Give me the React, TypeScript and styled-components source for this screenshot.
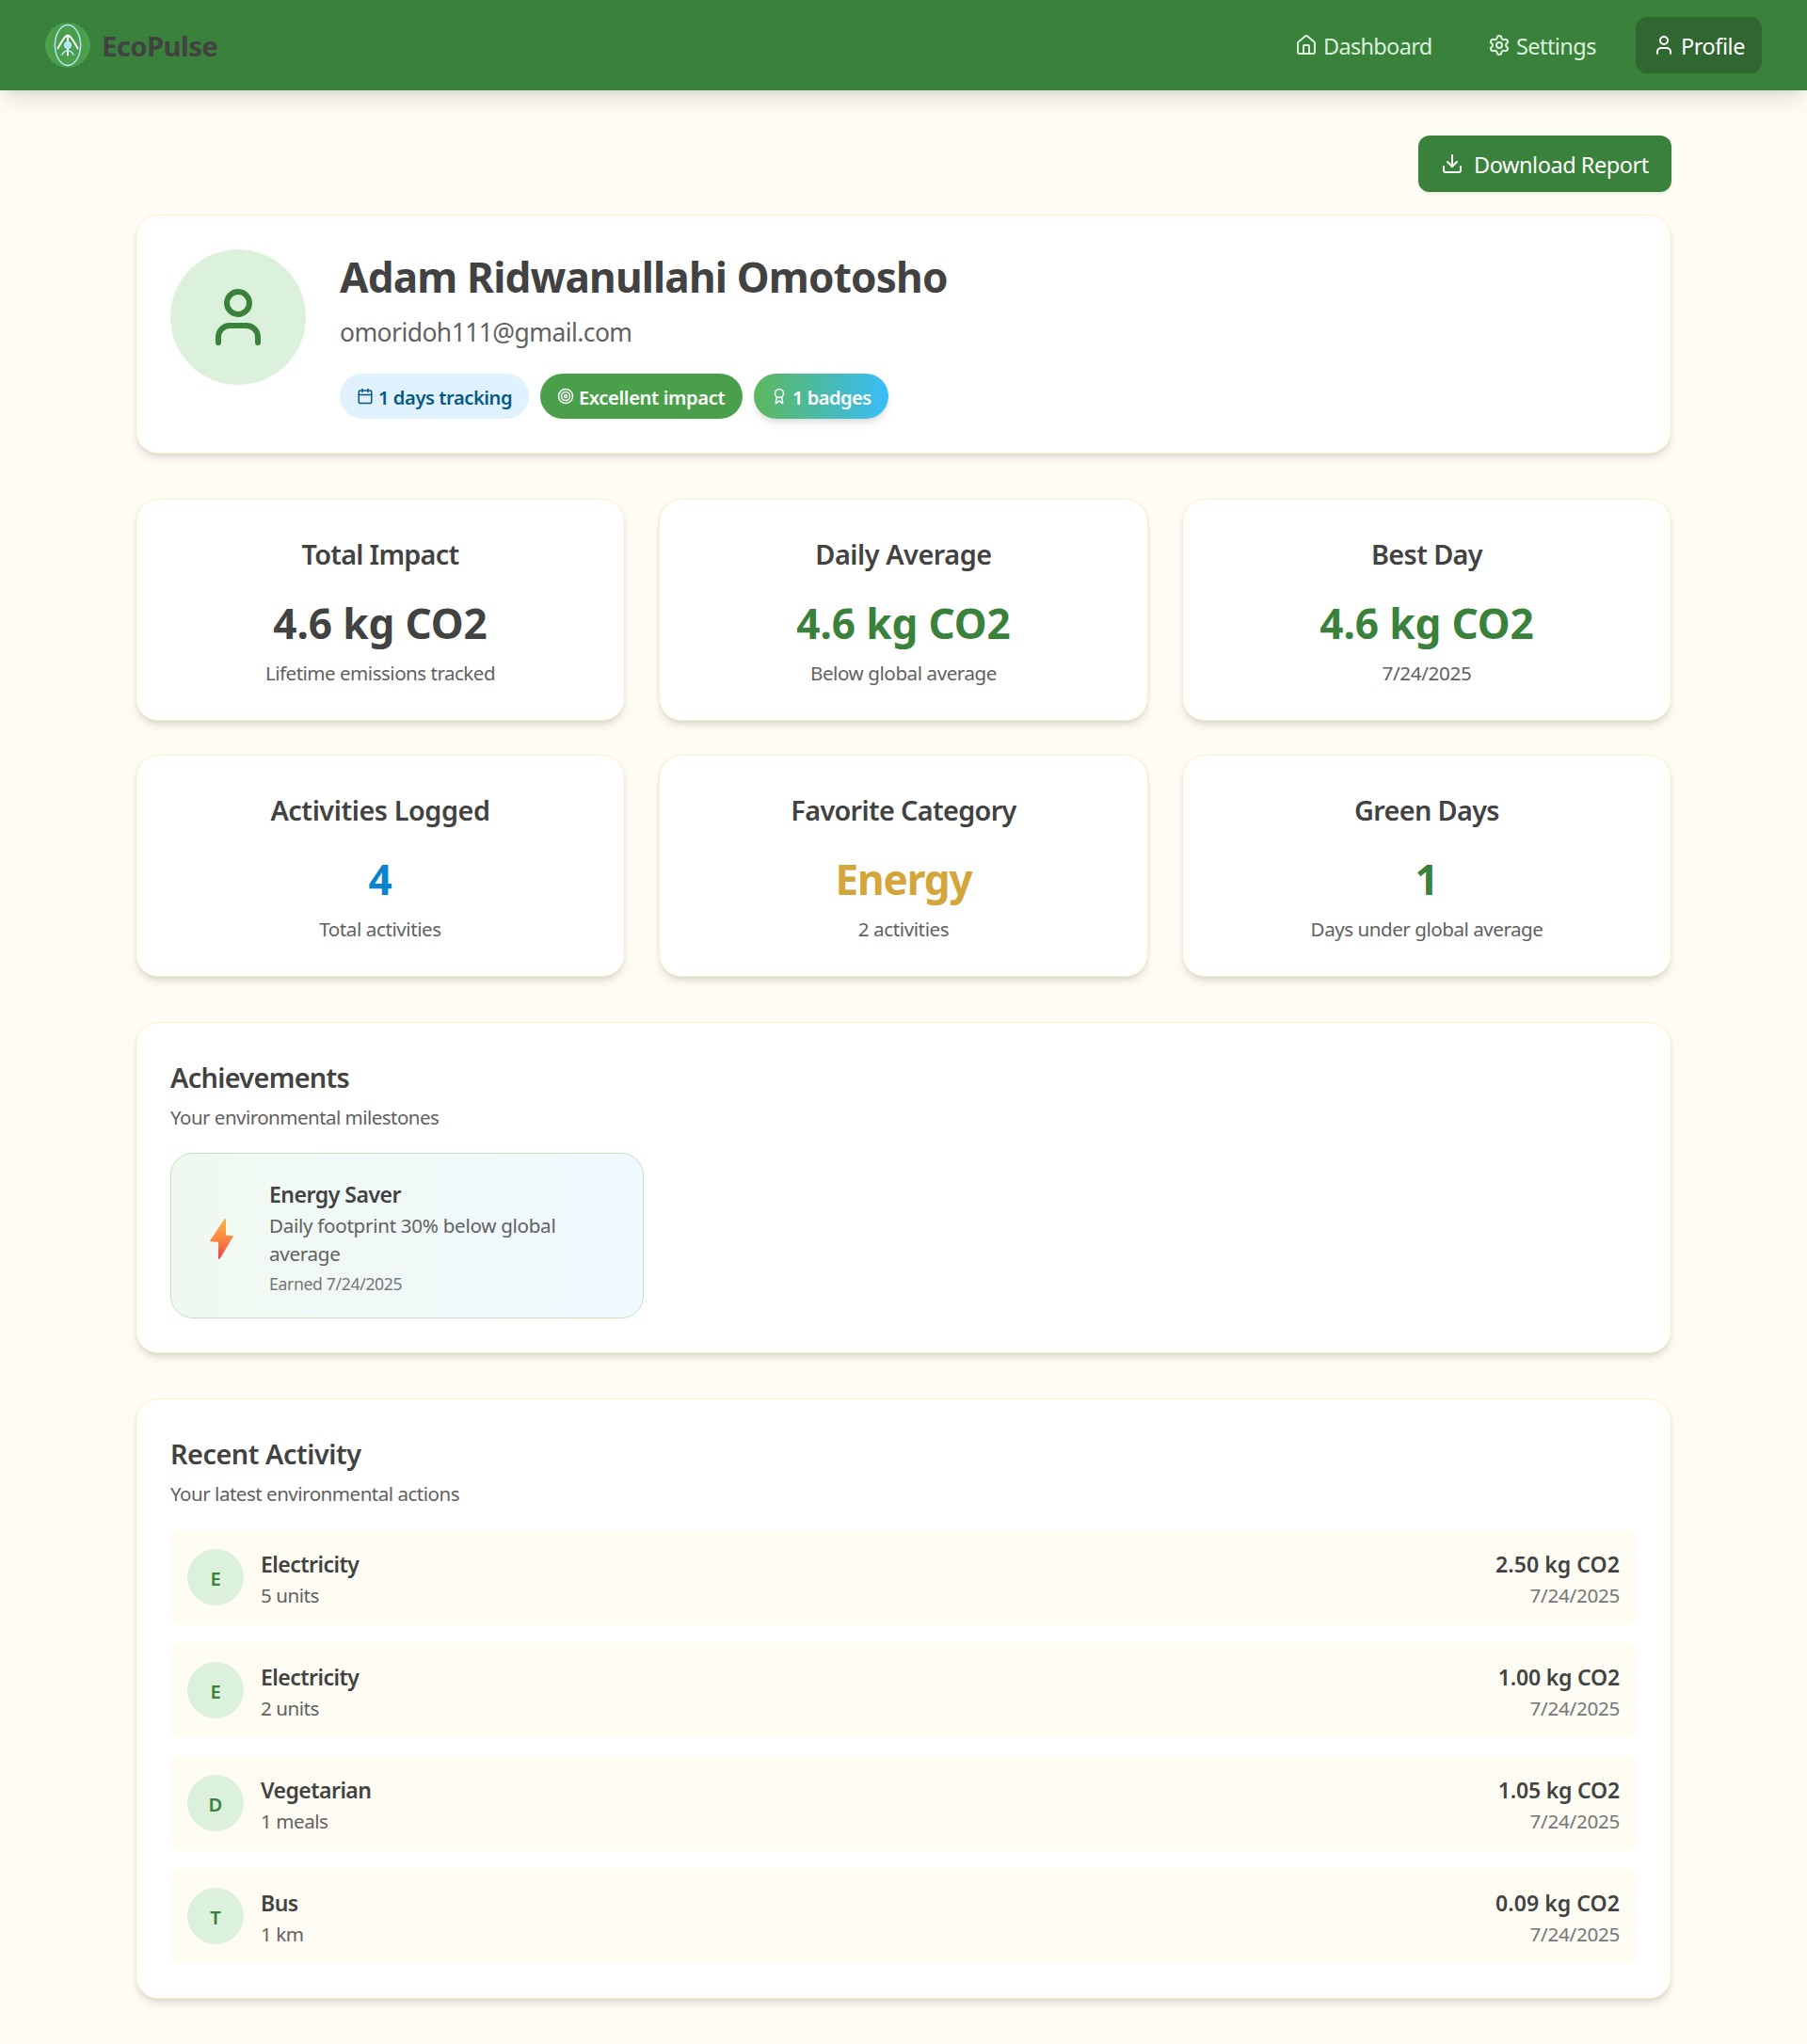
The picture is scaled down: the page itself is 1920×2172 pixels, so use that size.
import React from "react";
import styled, { createGlobalStyle, css } from "styled-components";
import { Award, Calendar, Download, House, Settings, Target, User } from "lucide-react";

const color = {
  page: "#fffcf5",
  row: "#fffdf3",
  cardBorder: "#fbefc3",
  ink: "#424242",
  muted: "#616161",
  faint: "#757575",
  green: "#3a813b",
  greenDark: "#30662f",
  greenMid: "#4a9f4a",
  greenSoft: "#dcf1dc",
  blue: "#0a84cc",
  gold: "#d4a53a",
};

const type = (size: number, line: number, weight = 400) => css<{ $track?: number }>`
  font-size: ${size * (weight === 600 ? 0.96 : 0.98)}px;
  line-height: ${line + (size > 40 ? 5 : 2)}px;
  margin-bottom: ${size > 40 ? -5 : -2}px;
  font-weight: ${weight};
  letter-spacing: ${(p) => p.$track ?? -0.5}px;
`;

const GlobalStyle = createGlobalStyle`
  *, *::before, *::after { box-sizing: border-box; }
  body {
    margin: 0;
    background: ${color.page};
    color: ${color.ink};
    font-family: "Segoe UI", "Noto Sans", sans-serif;
  }
  h1, h2, h3, p { margin: 0; }
  svg { display: block; flex: none; }
`;

const Header = styled.header`
  display: flex;
  align-items: center;
  justify-content: space-between;
  height: 96px;
  padding: 0 48px;
  background: ${color.green};
  box-shadow: 0 15px 22.5px -4.5px rgba(0, 0, 0, 0.1), 0 6px 9px -6px rgba(0, 0, 0, 0.1);
`;

const Brand = styled.div`
  display: flex;
  align-items: center;
  gap: 12px;
`;

const BrandName = styled.span`
  ${type(30, 42, 700)}
`;

const Nav = styled.nav`
  display: flex;
  gap: 24px;
`;

const NavLink = styled.a<{ $active?: boolean; $width: number }>`
  display: flex;
  align-items: center;
  gap: 6px;
  width: ${(p) => p.$width}px;
  height: 60px;
  padding: 0 0 0 18px;
  border-radius: 12px;
  color: ${(p) => (p.$active ? "#ffffff" : color.greenSoft)};
  background: ${(p) => (p.$active ? color.greenDark : "transparent")};
`;

const NavText = styled.span`
  ${type(24, 36)}
  white-space: nowrap;
`;

const Main = styled.main`
  display: flex;
  flex-direction: column;
  gap: 48px;
  width: 1632px;
  margin: 0 auto;
  padding: 48px 0;
`;

const Intro = styled.div`
  display: flex;
  flex-direction: column;
  gap: 24px;
`;

const DownloadButton = styled.button`
  display: flex;
  align-items: center;
  align-self: flex-end;
  gap: 11px;
  width: 269px;
  height: 60px;
  padding: 0 0 0 24px;
  border: 0;
  border-radius: 12px;
  color: #ffffff;
  background: ${color.green};
  font-family: inherit;
  box-shadow: 0 1.5px 3px rgba(0, 0, 0, 0.08);
`;

const Card = styled.section`
  padding: 36px;
  border: 1px solid ${color.cardBorder};
  border-radius: 24px;
  background: #ffffff;
  box-shadow: 0 6px 9px -1.5px rgba(0, 0, 0, 0.1), 0 3px 6px -3px rgba(0, 0, 0, 0.1);
`;

const ProfileCard = styled(Card)`
  display: flex;
  gap: 36px;
`;

const Avatar = styled.div`
  display: flex;
  align-items: center;
  justify-content: center;
  flex: none;
  width: 144px;
  height: 144px;
  border-radius: 50%;
  color: ${color.green};
  background: ${color.greenSoft};
`;

const Identity = styled.div`
  display: flex;
  flex-direction: column;
  height: 180px;
`;

const Name = styled.h1`
  ${type(45, 54, 700)}
`;

const Email = styled.p`
  ${type(27, 42)}
  padding-top: 12px;
  color: ${color.muted};
`;

const Pills = styled.div`
  display: flex;
  gap: 12px;
  margin-top: auto;
`;

const Pill = styled.span<{ $kind: "days" | "impact" | "badges"; $width: number }>`
  display: flex;
  align-items: center;
  gap: 5px;
  width: ${(p) => p.$width}px;
  height: 48px;
  padding-left: 18px;
  border-radius: 24px;
  color: ${(p) => (p.$kind === "days" ? "#075985" : "#ffffff")};
  background: ${(p) =>
    p.$kind === "days"
      ? "#e0f2fe"
      : p.$kind === "impact"
        ? color.greenMid
        : "linear-gradient(90deg, #5cb85c, #38bdf8)"};
  box-shadow: ${(p) =>
    p.$kind === "badges"
      ? "0 6px 9px -1.5px rgba(0, 0, 0, 0.1), 0 3px 6px -3px rgba(0, 0, 0, 0.1)"
      : "none"};
`;

const PillText = styled.span`
  ${type(21, 30, 600)}
  white-space: nowrap;
`;

const StatGrid = styled.div`
  display: grid;
  grid-template-columns: repeat(3, 1fr);
  gap: 36px;
`;

const StatCard = styled(Card)`
  display: flex;
  flex-direction: column;
  align-items: center;
  height: 236px;
`;

const CardTitle = styled.h2`
  ${type(30, 42, 600)}
`;

const StatValue = styled.p<{ $color: string }>`
  ${type(45, 54, 700)}
  padding-top: 24px;
  color: ${(p) => p.$color};
`;

const StatNote = styled.p`
  ${type(21, 30)}
  padding-top: 12px;
  color: ${color.muted};
`;

const CardSubtitle = styled.p`
  ${type(21, 30)}
  padding-top: 6px;
  color: ${color.muted};
`;

const BadgeGrid = styled.div`
  display: grid;
  grid-template-columns: repeat(3, 1fr);
  gap: 24px;
  padding-top: 24px;
`;

const Badge = styled.article`
  display: flex;
  align-items: center;
  gap: 18px;
  height: 176px;
  padding: 0 24px;
  border: 1px solid #bfe6c0;
  border-radius: 24px;
  background: linear-gradient(90deg, #f0f9f0, #f0f9ff);
`;

const BadgeIcon = styled.div`
  display: flex;
  justify-content: center;
  flex: none;
  width: 62px;
  padding: 7px 4px 0 0;
`;

const BadgeBody = styled.div`
  display: flex;
  flex-direction: column;
  height: 126px;
`;

const BadgeName = styled.h3`
  ${type(24, 36, 600)}
`;

const BadgeText = styled.p`
  padding-top: 1px;
  margin-bottom: -1px;
  font-size: 20.6px;
  line-height: 30px;
  letter-spacing: -0.29px;
  color: ${color.muted};
`;

const BadgeDate = styled.p`
  ${type(18, 24)}
  padding-top: 5px;
  color: ${color.faint};
`;

const Rows = styled.div`
  display: flex;
  flex-direction: column;
  gap: 18px;
  padding-top: 24px;
`;

const Row = styled.div`
  display: flex;
  align-items: center;
  gap: 18px;
  height: 102px;
  padding: 0 18px;
  border-radius: 12px;
  background: ${color.row};
`;

const Initial = styled.div`
  display: flex;
  align-items: center;
  justify-content: center;
  flex: none;
  width: 60px;
  height: 60px;
  border-radius: 50%;
  color: ${color.green};
  background: ${color.greenSoft};
`;

const RowColumn = styled.div<{ $end?: boolean }>`
  display: flex;
  flex-direction: column;
  height: 66px;
  margin-left: ${(p) => (p.$end ? "auto" : "0")};
  text-align: ${(p) => (p.$end ? "right" : "left")};
`;

const RowTitle = styled.p`
  ${type(24, 36, 600)}
`;

const RowNote = styled.p<{ $faint?: boolean }>`
  ${type(21, 30)}
  color: ${(p) => (p.$faint ? color.faint : color.muted)};
`;

const Logo = () => (
  <svg width="48" height="48" viewBox="0 0 48 48" fill="none" strokeLinecap="round">
    <circle cx="24" cy="24" r="24" fill={color.greenMid} />
    <ellipse cx="24" cy="24" rx="13.6" ry="21.4" stroke="#b9e3fb" strokeWidth="1.5" />
    <path d="M13.4 27.4C17 21.5 20 14 24 13.4C28 14 31 21.5 34.6 27.4M24 13.4V34.6" stroke="#ffffff" strokeWidth="2" />
    <path d="M17.8 34.4C19.2 31.2 21.5 30 24 30C26.500 30 28.800 31.2 30.200 34.4" stroke="#b9e3fb" strokeWidth="1.5" />
    <circle cx="24" cy="24" r="4.2" fill="#b9e3fb" />
  </svg>
);

const Bolt = () => (
  <svg width="25" height="43" viewBox="0 0 25 43">
    <defs>
      <linearGradient id="bolt" x1="0" y1="0" x2="0" y2="1">
        <stop offset="0" stopColor="#fbb140" />
        <stop offset="0.5" stopColor="#fc8840" />
        <stop offset="1" stopColor="#f03e4c" />
      </linearGradient>
    </defs>
    <path
      d="M15.400 0.500Q15.700 0 16.300 0Q17 0 17 0.700V17.600L24.300 18.200Q25.100 18.400 24.800 19.100L10.600 42.400Q10.200 43 9.600 43Q9 43 9 42.200V24.700L0.700 24.200Q-0.100 24 0.200 23.300Z"
      fill="url(#bolt)"
    />
  </svg>
);

const stats = [
  { title: "Total Impact", tt: -0.74, value: "4.6 kg CO2", vt: -0.12, note: "Lifetime emissions tracked", nt: -0.51, tint: color.ink },
  { title: "Daily Average", tt: -0.44, value: "4.6 kg CO2", vt: -0.12, note: "Below global average", nt: -0.43, tint: color.green },
  { title: "Best Day", tt: -0.6, value: "4.6 kg CO2", vt: -0.12, note: "7/24/2025", nt: -0.3, tint: color.green },
  { title: "Activities Logged", tt: -0.42, value: "4", vt: 0, note: "Total activities", nt: -0.42, tint: color.blue },
  { title: "Favorite Category", tt: -0.65, value: "Energy", vt: -1.2, note: "2 activities", nt: -0.4, tint: color.gold },
  { title: "Green Days", tt: -0.65, value: "1", vt: 0, note: "Days under global average", nt: -0.47, tint: color.green },
];

const activities = [
  { initial: "E", title: "Electricity", amount: "5 units", co2: "2.50 kg CO2", ct: 0.05 },
  { initial: "E", title: "Electricity", amount: "2 units", co2: "1.00 kg CO2", ct: -0.2 },
  { initial: "D", title: "Vegetarian", amount: "1 meals", co2: "1.05 kg CO2", ct: -0.2 },
  { initial: "T", title: "Bus", amount: "1 km", co2: "0.09 kg CO2", ct: 0.05 },
];

export default function App() {
  return (
    <>
      <GlobalStyle />
      <Header>
        <Brand>
          <Logo />
          <BrandName $track={-0.66}>EcoPulse</BrandName>
        </Brand>
        <Nav>
          <NavLink $width={181}>
            <House size={24} />
            <NavText $track={-0.7}>Dashboard</NavText>
          </NavLink>
          <NavLink $width={151}>
            <Settings size={24} />
            <NavText $track={-0.57}>Settings</NavText>
          </NavLink>
          <NavLink $width={134} $active>
            <User size={24} />
            <NavText $track={-0.45}>Profile</NavText>
          </NavLink>
        </Nav>
      </Header>
      <Main>
        <Intro>
          <DownloadButton>
            <Download size={24} />
            <NavText $track={-0.47}>Download Report</NavText>
          </DownloadButton>
          <ProfileCard>
            <Avatar>
              <User size={72} />
            </Avatar>
            <Identity>
              <Name $track={-0.83}>Adam Ridwanullahi Omotosho</Name>
              <Email $track={-0.56}>omoridoh111@gmail.com</Email>
              <Pills>
                <Pill $kind="days" $width={201}>
                  <Calendar size={18} />
                  <PillText $track={-0.45}>1 days tracking</PillText>
                </Pill>
                <Pill $kind="impact" $width={215}>
                  <Target size={18} />
                  <PillText $track={-0.38}>Excellent impact</PillText>
                </Pill>
                <Pill $kind="badges" $width={143}>
                  <Award size={18} />
                  <PillText $track={-0.55}>1 badges</PillText>
                </Pill>
              </Pills>
            </Identity>
          </ProfileCard>
        </Intro>
        <StatGrid>
          {stats.map((s) => (
            <StatCard key={s.title}>
              <CardTitle $track={s.tt}>{s.title}</CardTitle>
              <StatValue $track={s.vt} $color={s.tint}>{s.value}</StatValue>
              <StatNote $track={s.nt}>{s.note}</StatNote>
            </StatCard>
          ))}
        </StatGrid>
        <Card>
          <CardTitle $track={-0.65}>Achievements</CardTitle>
          <CardSubtitle $track={-0.56}>Your environmental milestones</CardSubtitle>
          <BadgeGrid>
            <Badge>
              <BadgeIcon>
                <Bolt />
              </BadgeIcon>
              <BadgeBody>
                <BadgeName $track={-0.5}>Energy Saver</BadgeName>
                <BadgeText>Daily footprint 30% below global average</BadgeText>
                <BadgeDate $track={-0.35}>Earned 7/24/2025</BadgeDate>
              </BadgeBody>
            </Badge>
          </BadgeGrid>
        </Card>
        <Card>
          <CardTitle $track={-0.45}>Recent Activity</CardTitle>
          <CardSubtitle $track={-0.51}>Your latest environmental actions</CardSubtitle>
          <Rows>
            {activities.map((a) => (
              <Row key={a.title + a.amount}>
                <Initial>
                  <PillText $track={0}>{a.initial}</PillText>
                </Initial>
                <RowColumn>
                  <RowTitle $track={-0.55}>{a.title}</RowTitle>
                  <RowNote $track={-0.45}>{a.amount}</RowNote>
                </RowColumn>
                <RowColumn $end>
                  <RowTitle $track={a.ct}>{a.co2}</RowTitle>
                  <RowNote $track={-0.25} $faint>7/24/2025</RowNote>
                </RowColumn>
              </Row>
            ))}
          </Rows>
        </Card>
      </Main>
    </>
  );
}
